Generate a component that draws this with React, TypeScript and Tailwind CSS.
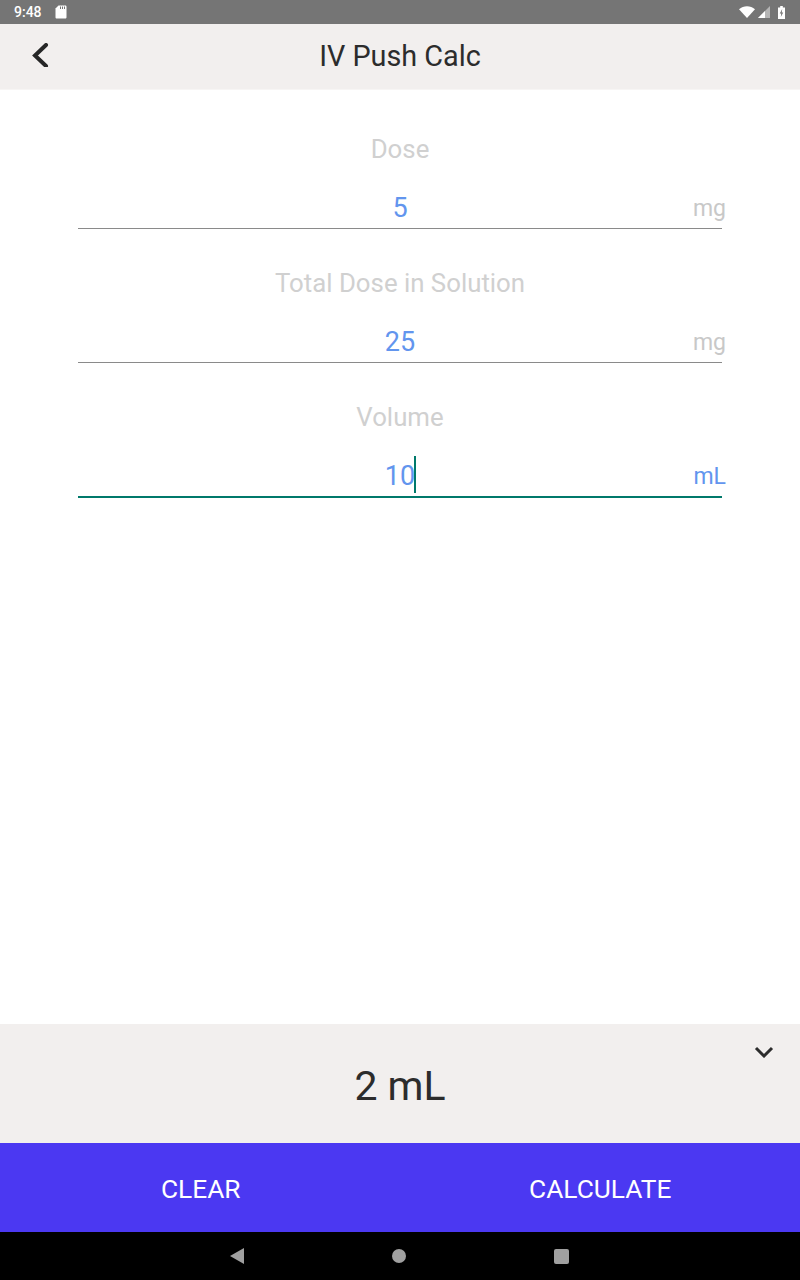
const fields = [
  { label: 'Dose', value: '5', unit: 'mg', active: false },
  { label: 'Total Dose in Solution', value: '25', unit: 'mg', active: false },
  { label: 'Volume', value: '10', unit: 'mL', active: true },
];

const StatusBar = () => (
  <div className="flex h-6 items-center justify-between bg-[#757575] pl-3.5 pr-[15px] text-white">
    <div className="flex items-center gap-[13px]">
      <span className="text-[14px] font-medium leading-none">9:48</span>
      <svg width="12" height="14" viewBox="0 0 12 14">
        <path
          d="M3.5 0.5H10.2C11 0.5 11.5 1 11.5 1.8V12.2C11.5 13 11 13.5 10.2 13.5H1.8C1 13.5 0.5 13 0.5 12.2V3.5Z"
          fill="#fff"
        />
        <path d="M5 1.5h1v2.5H5zM7 1.5h1v2.5H7zM9 1.5h1v2.5H9z" fill="#757575" />
      </svg>
    </div>
    <div className="flex items-center gap-[3px]">
      <svg width="16" height="12" viewBox="0 0 16 12">
        <path d="M0 3.2C4.5 -0.9 11.5 -0.9 16 3.2L8 12Z" fill="#fff" />
      </svg>
      <svg width="12" height="12" viewBox="0 0 12 12">
        <path d="M12 0V12H0Z" fill="#b5b5b5" />
        <path d="M7 5V12H0Z" fill="#fff" />
      </svg>
      <svg className="ml-[5px]" width="7" height="13" viewBox="0 0 8 13" preserveAspectRatio="none">
        <path d="M2.5 0h3v1.5H8V13H0V1.5h2.500Z" fill="#fff" />
        <path d="M4.800 3 2 7.500h1.700L3.200 11 6 6.500H4.300Z" fill="#757575" />
      </svg>
    </div>
  </div>
);

const Field = ({ label, value, unit, active }: (typeof fields)[number]) => (
  <div className="h-[134px] text-center">
    <div className="text-[25.8px] leading-[36px] text-[#d0d0d0]">{label}</div>
    <div
      className={`mt-[22px] flex w-full items-center ${
        active ? 'h-[41px] border-b-2 border-[#00796b]' : 'h-[40px] border-b border-[#8a8a8a]'
      }`}
    >
      <div className="-ml-1 flex-1" />
      <div className="relative text-[27px] leading-none text-[#6295ee]">
        {value}
        {active && <span className="absolute -right-[1px] -top-[7px] h-[37px] w-0.5 bg-[#00796b]" />}
      </div>
      <div className={`-mr-1 flex-1 text-right text-[23px] leading-none ${active ? 'text-[#6295ee]' : 'text-[#c8c8c8]'}`}>
        {unit}
      </div>
    </div>
  </div>
);

export default function App() {
  return (
    <div className="flex h-[1280px] w-[800px] flex-col bg-white font-['Roboto',sans-serif]">
      <StatusBar />
      <header className="relative flex h-[66px] items-center justify-center border-b border-[#f7f5f4] bg-[#f2efee]">
        <svg className="absolute left-[31px] top-[19px]" width="18" height="24" viewBox="0 0 18 24" fill="none">
          <path d="M15 2 4 12.500 15 23" stroke="#262626" strokeWidth="4" strokeLinecap="round" strokeLinejoin="miter" />
        </svg>
        <h1 className="text-[28.8px] font-normal leading-none text-[#2c2c2c]">IV Push Calc</h1>
      </header>

      <main className="flex-1 bg-white px-[78px] pt-[41px]">
        {fields.map((f) => (
          <Field key={f.label} {...f} />
        ))}
      </main>

      <section className="relative flex h-[119px] items-center justify-center bg-[#f2efee]">
        <svg className="absolute right-[26px] top-[22px]" width="20" height="12" viewBox="0 0 20 12" fill="none">
          <path d="M2 2 10 10 18 2" stroke="#2c2c2c" strokeWidth="3" />
        </svg>
        <span className="pt-[6px] text-[41px] leading-none text-[#2c2c2c]">2 mL</span>
      </section>

      <div className="grid h-[89px] grid-cols-2 bg-[#4b38f2] pl-[1px] pt-[4px] text-[26.300px] text-white">
        <button className="flex items-center justify-center">CLEAR</button>
        <button className="flex items-center justify-center">CALCULATE</button>
      </div>

      <nav className="flex h-12 items-center justify-center gap-[148px] bg-black pr-[1px]">
        <svg width="14" height="16" viewBox="0 0 14 16">
          <path d="M14 0V16L0 8Z" fill="#a0a0a0" />
        </svg>
        <span className="h-[14px] w-[14px] rounded-full bg-[#a0a0a0]" />
        <span className="h-[15px] w-[15px] rounded-[2px] bg-[#a0a0a0]" />
      </nav>
    </div>
  );
}
